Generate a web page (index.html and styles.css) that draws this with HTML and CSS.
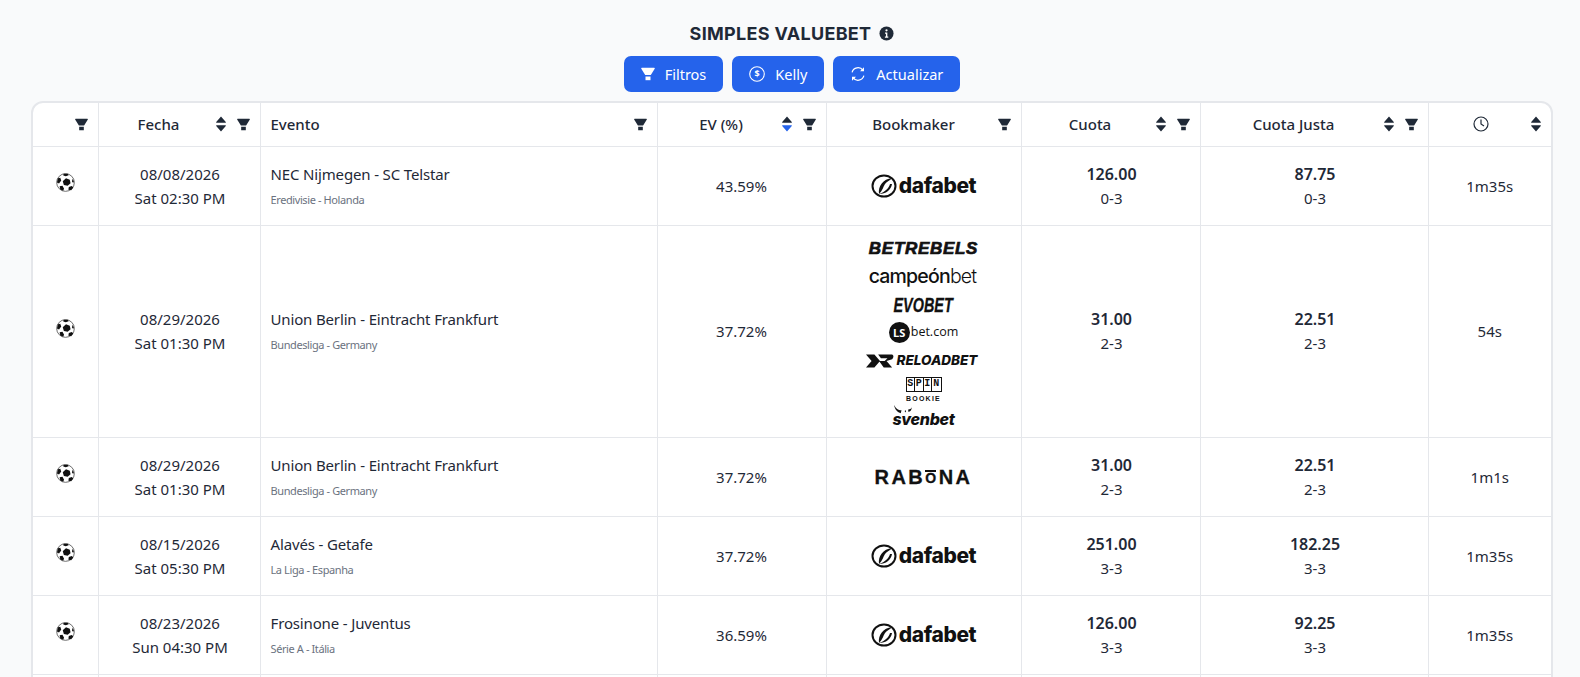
FILE: index.html
```html
<!DOCTYPE html>
<html>
<head>
<meta charset="utf-8">
<title>Simples Valuebet</title>
<link rel="stylesheet" href="styles.css">
</head>
<body>
<svg class="defs" width="0" height="0">
	<symbol id="funnel" viewBox="0 0 14 14">
		<path d="M.8 .8h12.400a.6.6 0 0 1 .5 1L9.800 8H4.200L.3 1.800a.6.6 0 0 1 .5-1z"/>
		<path d="M4.500 9.500h5V13.200h-5z"/>
	</symbol>
	<symbol id="sort" viewBox="0 0 10 16">
		<path d="M5 .5l4.800 5.500a.5.5 0 0 1-.4.800H.6a.5.5 0 0 1-.4-.8z"/>
		<path d="M5 15.500L.2 10a.5.5 0 0 1 .4-.8h8.800a.5.5 0 0 1 .4.800z" class="down"/>
	</symbol>
	<symbol id="ball" viewBox="0 0 20 20">
		<circle cx="10" cy="10" r="9.300" fill="#fff" stroke="#555" stroke-width=".9"/>
		<path d="M10.500 5.500l4 1.500.8 3.800-3 2.700-4-.8-1.200-4z" fill="#111"/>
		<path d="M2 5.500l2.500-.5 1 3-2.300 3L1 10z" fill="#111"/>
		<path d="M3.800 14l3-.5 1.700 3-1 2.300-3-1.500z" fill="#111"/>
		<path d="M13 17.500l.5-2.800 3-1 1.800 1.500-2.300 3z" fill="#111"/>
		<path d="M8 .8l4.500 0 .8 1.500-3 1.200-2.600-1z" fill="#111"/>
		<path d="M17.500 6l1.300 3-.7 1.500-1.300-1.500z" fill="#111"/>
	</symbol>
	<symbol id="dafa" viewBox="0 0 26 26">
		<ellipse cx="13" cy="13" rx="11.500" ry="10.500" fill="none" stroke="#111" stroke-width="2"/>
		<path d="M8 21C7 13 12 6 21 5c-2 3-5 3-7 6-2 3-2 6-6 10z" fill="#111"/>
		<path d="M8 21c7 0 12-4 13-10l-2 0c-1 4-5 8-11 10z" fill="#111"/>
	</symbol>
</svg>

<div class="page">
	<div class="heading">
		<span>SIMPLES VALUEBET</span>
		<svg class="info" viewBox="0 0 16 16"><circle cx="8" cy="8" r="7.500" fill="#1f2937"/><circle cx="8" cy="4.600" r="1.200" fill="#fff"/><path d="M6.400 7h2.500v4.300h1v1.200H6.300v-1.200h1.100V8.200h-1z" fill="#fff"/></svg>
	</div>

	<div class="toolbar">
		<button class="btn">
			<svg class="btn-icon small"><use href="#funnel"/></svg>
			Filtros
		</button>
		<button class="btn">
			<svg class="btn-icon" viewBox="0 0 16 16"><circle cx="8" cy="8" r="7.300" fill="none" stroke="#fff" stroke-width="1.100"/><text x="8" y="11.300" text-anchor="middle" class="dollar">$</text></svg>
			Kelly
		</button>
		<button class="btn">
			<svg class="btn-icon" viewBox="0 0 16 16"><path d="M2.100 6.300A6.100 6.100 0 0 1 13 4.300M13.900 9.700A6.100 6.100 0 0 1 3 11.700" fill="none" stroke="#fff" stroke-width="1.200"/><path d="M14 1.300v4h-4zM2 14.700v-4h4z" fill="#fff"/></svg>
			Actualizar
		</button>
	</div>

	<div class="card">
		<table>
			<colgroup>
				<col class="c-sport"><col class="c-date"><col class="c-event"><col class="c-ev"><col class="c-book"><col class="c-odd"><col class="c-fair"><col class="c-time">
			</colgroup>
			<thead>
				<tr>
					<th><div class="th"><span class="th-label"></span><svg class="funnel"><use href="#funnel"/></svg></div></th>
					<th><div class="th"><span class="th-label">Fecha</span><svg class="sort"><use href="#sort"/></svg><svg class="funnel"><use href="#funnel"/></svg></div></th>
					<th><div class="th"><span class="th-label left">Evento</span><svg class="funnel"><use href="#funnel"/></svg></div></th>
					<th><div class="th"><span class="th-label">EV (%)</span><svg class="sort active"><use href="#sort"/></svg><svg class="funnel"><use href="#funnel"/></svg></div></th>
					<th><div class="th"><span class="th-label">Bookmaker</span><svg class="funnel"><use href="#funnel"/></svg></div></th>
					<th><div class="th"><span class="th-label">Cuota</span><svg class="sort"><use href="#sort"/></svg><svg class="funnel"><use href="#funnel"/></svg></div></th>
					<th><div class="th"><span class="th-label">Cuota Justa</span><svg class="sort"><use href="#sort"/></svg><svg class="funnel"><use href="#funnel"/></svg></div></th>
					<th><div class="th"><span class="th-label"><svg class="clock" viewBox="0 0 16 16"><circle cx="8" cy="8" r="7" fill="none" stroke="#1f2937" stroke-width="1.200"/><path d="M8 3.500V8l3 2" fill="none" stroke="#1f2937" stroke-width="1.200"/></svg></span><svg class="sort"><use href="#sort"/></svg></div></th>
				</tr>
			</thead>
			<tbody>
				<tr>
					<td><svg class="ball"><use href="#ball"/></svg></td>
					<td class="nudge">08/08/2026<br>Sat 02:30 PM</td>
					<td class="event"><div class="match">NEC Nijmegen - SC Telstar</div><div class="league">Eredivisie - Holanda</div></td>
					<td>43.59%</td>
					<td><div class="logo dafabet"><svg class="dafa-mark"><use href="#dafa"/></svg>dafabet</div></td>
					<td class="nudge"><b>126.00</b><br>0-3</td>
					<td class="nudge"><b>87.75</b><br>0-3</td>
					<td>1m35s</td>
				</tr>
				<tr>
					<td><svg class="ball"><use href="#ball"/></svg></td>
					<td class="nudge">08/29/2026<br>Sat 01:30 PM</td>
					<td class="event"><div class="match">Union Berlin - Eintracht Frankfurt</div><div class="league">Bundesliga - Germany</div></td>
					<td>37.72%</td>
					<td>
						<div class="logos">
							<div class="logo betrebels">BETREBELS</div>
							<div class="logo campeon"><b>campeón</b>bet</div>
							<div class="logo evobet">EVOBET</div>
							<div class="logo lsbet"><span class="ls">LS</span>bet.com</div>
							<div class="logo reload"><svg class="reload-mark" viewBox="0 0 30 16"><path d="M0 1h9l6 7-6 7H0l6-7zM13 1h14c3 0 3 3 1 5l-6 2 6 7h-9l-5-7h6l3-3H16z" fill="#111"/></svg>RELOADBET</div>
							<div class="logo spin">
								<div class="reels"><span>S</span><span>P</span><span>I</span><span>N</span></div>
								<div class="bookie">BOOKIE</div>
							</div>
							<div class="logo sven">
								<svg class="horns" viewBox="0 0 24 12"><path d="M0 0c3 5 5 7 10 7l-1 4C5 10 1 6 0 0zM14 8l2-1v3zM19 6c2 0 4-1 5-3-1 4-2 6-5 6z" fill="#111"/></svg>
								svenbet
							</div>
						</div>
					</td>
					<td class="nudge"><b>31.00</b><br>2-3</td>
					<td class="nudge"><b>22.51</b><br>2-3</td>
					<td>54s</td>
				</tr>
				<tr>
					<td><svg class="ball"><use href="#ball"/></svg></td>
					<td class="nudge">08/29/2026<br>Sat 01:30 PM</td>
					<td class="event"><div class="match">Union Berlin - Eintracht Frankfurt</div><div class="league">Bundesliga - Germany</div></td>
					<td>37.72%</td>
					<td><div class="logo rabona">RAB<span class="macron">O</span>NA</div></td>
					<td class="nudge"><b>31.00</b><br>2-3</td>
					<td class="nudge"><b>22.51</b><br>2-3</td>
					<td>1m1s</td>
				</tr>
				<tr>
					<td><svg class="ball"><use href="#ball"/></svg></td>
					<td class="nudge">08/15/2026<br>Sat 05:30 PM</td>
					<td class="event"><div class="match">Alavés - Getafe</div><div class="league">La Liga - Espanha</div></td>
					<td>37.72%</td>
					<td><div class="logo dafabet"><svg class="dafa-mark"><use href="#dafa"/></svg>dafabet</div></td>
					<td class="nudge"><b>251.00</b><br>3-3</td>
					<td class="nudge"><b>182.25</b><br>3-3</td>
					<td>1m35s</td>
				</tr>
				<tr>
					<td><svg class="ball"><use href="#ball"/></svg></td>
					<td class="nudge">08/23/2026<br>Sun 04:30 PM</td>
					<td class="event"><div class="match">Frosinone - Juventus</div><div class="league">Série A - Itália</div></td>
					<td>36.59%</td>
					<td><div class="logo dafabet"><svg class="dafa-mark"><use href="#dafa"/></svg>dafabet</div></td>
					<td class="nudge"><b>126.00</b><br>3-3</td>
					<td class="nudge"><b>92.25</b><br>3-3</td>
					<td>1m35s</td>
				</tr>
				<tr class="next">
					<td></td><td></td><td></td><td></td><td></td><td></td><td></td><td></td>
				</tr>
			</tbody>
		</table>
	</div>
</div>
</body>
</html>
```

FILE: styles.css
```css
* {
	box-sizing: border-box;
}
html, body {
	margin: 0;
	height: 100%;
	overflow: hidden;
}
body {
	background: #f9fafb;
	color: #1f2937;
	font-family: "Noto Sans", "Open Sans", sans-serif;
	font-size: 15px;
}
.defs {
	position: absolute;
}
.page {
	height: 677px;
	overflow: hidden;
	padding: 23px 27px 0 31px;
}

.heading {
	display: flex;
	justify-content: center;
	align-items: center;
	gap: 8px;
	height: 20px;
	margin-bottom: 13px;
	font-family: Inter, "Liberation Sans", sans-serif;
	font-size: 18px;
	font-weight: 700;
	letter-spacing: .3px;
}
.info {
	width: 15px;
	height: 15px;
}

.toolbar {
	display: flex;
	justify-content: center;
	gap: 9px;
	margin-bottom: 9px;
}
.btn {
	display: flex;
	align-items: center;
	gap: 10px;
	height: 36px;
	padding: 0 17px;
	border: 0;
	border-radius: 7px;
	background: #2563eb;
	color: #fff;
	font-family: inherit;
	font-size: 14.500px;
	cursor: pointer;
}
.btn-icon {
	width: 16px;
	height: 16px;
	fill: #fff;
}
.btn-icon.small {
	width: 14px;
	height: 14px;
}
.dollar {
	font-size: 9px;
	font-weight: 700;
	fill: #fff;
}

.card {
	border: 2px solid #e5e7eb;
	border-radius: 12px;
	background: #fff;
	overflow: hidden;
}
table {
	width: 100%;
	table-layout: fixed;
	border-collapse: collapse;
}
.c-sport { width: 65px; }
.c-date { width: 162px; }
.c-event { width: 397px; }
.c-ev { width: 169px; }
.c-book { width: 195px; }
.c-odd { width: 179px; }
.c-fair { width: 228px; }
th, td {
	border: 1px solid #e5e7eb;
	padding: 0 10px;
	text-align: center;
	line-height: 24px;
}
td.nudge {
	padding-left: 12px;
}
tr > :first-child { border-left: 0; }
tr > :last-child { border-right: 0; }
thead tr > * { border-top: 0; }
thead th {
	height: 43px;
	font-weight: 500;
}
tbody tr {
	height: 79px;
}
.th {
	display: flex;
	align-items: center;
	gap: 11px;
}
.th-label {
	flex: 1;
	display: flex;
	justify-content: center;
	padding-left: 4px;
}
.th-label.left {
	justify-content: flex-start;
	padding-left: 0;
}
.funnel {
	width: 13px;
	height: 13px;
	fill: #1f2937;
}
.sort {
	width: 10px;
	height: 16px;
	fill: #1f2937;
}
.down {
	fill: var(--sort-down, #1f2937);
}
.sort.active {
	--sort-down: #2563eb;
}
.clock {
	width: 16px;
	height: 16px;
}
.ball {
	display: block;
	width: 19px;
	height: 19px;
	margin: -6px auto 0;
}
b {
	font-size: 16px;
	font-weight: 600;
}
td.event {
	text-align: left;
}
.match {
	line-height: 24px;
	margin-top: -1px;
	letter-spacing: -.15px;
}
.league {
	font-size: 11px;
	letter-spacing: -.4px;
	line-height: 18px;
	margin-top: 5px;
	color: #6b7280;
}

.logos {
	display: flex;
	flex-direction: column;
	align-items: center;
	padding: 9px 0 10px;
}
.logos .logo {
	height: 28px;
}
.logo {
	display: flex;
	justify-content: center;
	align-items: center;
	color: #111;
	line-height: 1;
	white-space: nowrap;
}
.dafabet {
	font-family: Inter, sans-serif;
	font-size: 21px;
	font-weight: 800;
	letter-spacing: -.4px;
	gap: 2px;
}
.dafa-mark {
	width: 26px;
	height: 26px;
}
.betrebels {
	font-family: "Liberation Sans", sans-serif;
	font-size: 17px;
	font-weight: 700;
	font-style: italic;
	letter-spacing: .7px;
	-webkit-text-stroke: .7px #111;
}
.campeon {
	font-family: Inter, sans-serif;
	font-size: 19.500px;
	letter-spacing: -.8px;
	font-weight: 300;
	padding-right: 2px;
}
.campeon b {
	font-size: 19.500px;
	font-weight: 500;
}
.evobet {
	font-family: "Liberation Sans", sans-serif;
	font-size: 20px;
	font-weight: 700;
	font-style: italic;
	transform: scaleX(.72);
	-webkit-text-stroke: .3px #111;
}
.lsbet {
	font-family: "Open Sans", sans-serif;
	font-size: 12.500px;
	gap: 1px;
}
.ls {
	display: flex;
	justify-content: center;
	align-items: center;
	width: 21px;
	height: 21px;
	border-radius: 50%;
	background: #111;
	color: #fff;
	font-size: 11px;
	font-weight: 700;
}
.reload {
	font-family: Inter, sans-serif;
	font-size: 13.500px;
	font-weight: 800;
	font-style: italic;
	gap: 3px;
	padding-right: 4px;
}
.reload-mark {
	width: 28px;
	height: 16px;
}
.logos .spin {
	flex-direction: column;
	height: 30px;
}
.reels {
	display: flex;
	border: 1.500px solid #111;
	height: 15px;
}
.reels span {
	width: 8.500px;
	border-right: 1px solid #111;
	font-family: "Liberation Mono", monospace;
	font-size: 10px;
	font-weight: 700;
	line-height: 12px;
	text-align: center;
}
.reels span:last-child {
	border-right: 0;
}
.bookie {
	margin-top: 3px;
	font-family: "Liberation Sans", sans-serif;
	font-size: 7px;
	font-weight: 700;
	letter-spacing: 1.200px;
}
.logos .sven {
	flex-direction: column;
	align-items: flex-start;
	height: 22px;
	font-family: Inter, sans-serif;
	font-size: 16px;
	font-weight: 800;
	font-style: italic;
	letter-spacing: -.3px;
}
.horns {
	width: 22px;
	height: 11px;
	margin-bottom: -3px;
}
.rabona {
	font-family: "Liberation Sans", sans-serif;
	font-size: 20px;
	font-weight: 700;
	letter-spacing: 2.500px;
	-webkit-text-stroke: .3px #111;
}
.macron {
	display: inline-block;
	font-size: 14px;
	line-height: 13px;
	border-top: 2px solid #111;
	margin-top: 1px;
	letter-spacing: 0;
	margin-right: 2.500px;
}
```
